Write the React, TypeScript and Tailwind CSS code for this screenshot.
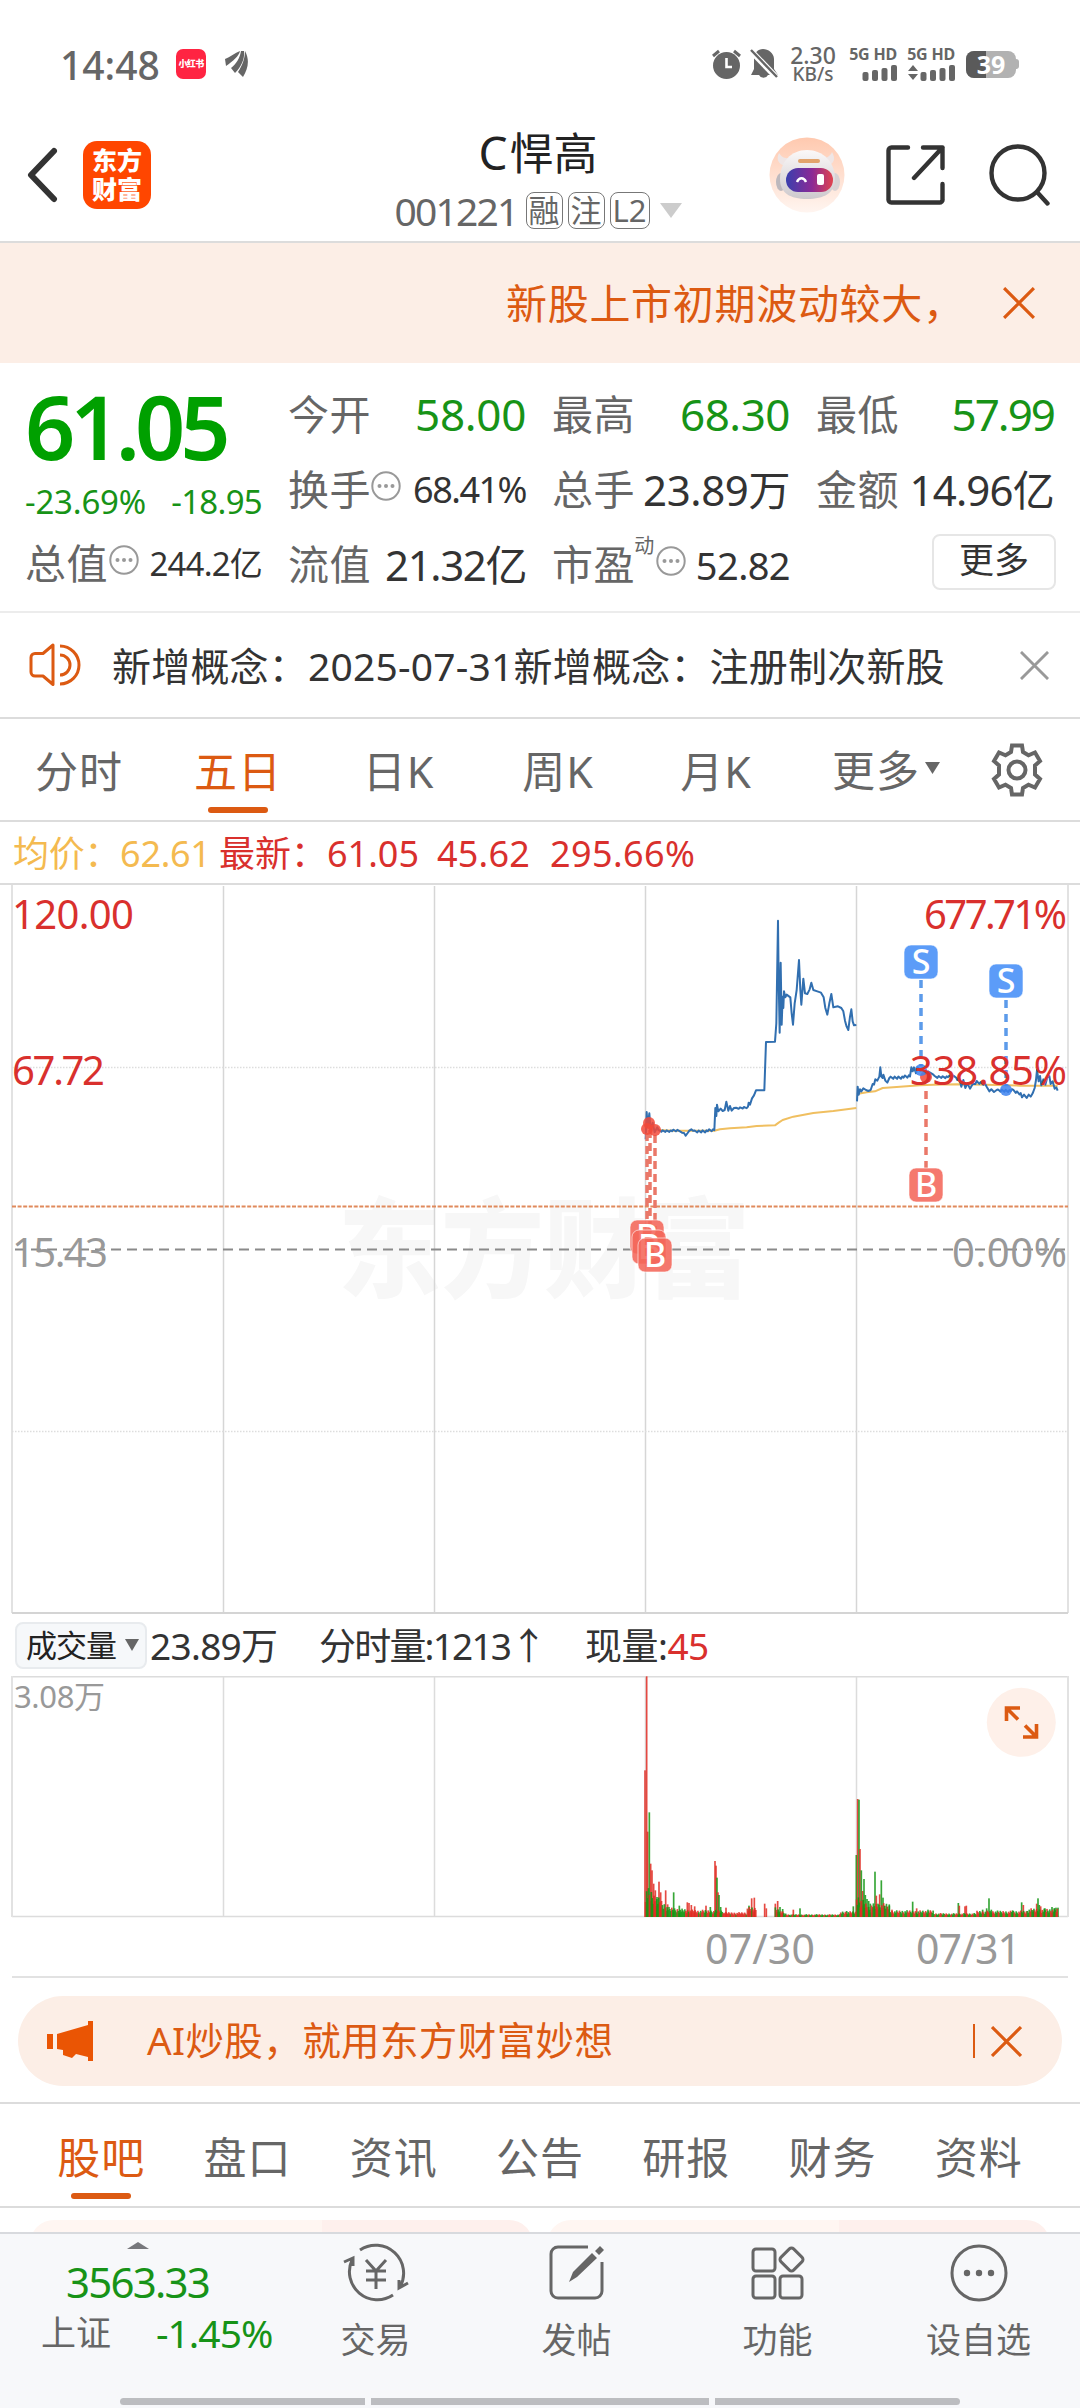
import type { ReactNode } from "react";

const ORANGE = "#dc5a12";

const quoteRows = [
  [
    { label: "今开", value: "58.00", cls: "text-[#179317] text-[44px] tracking-[-0.3px]" },
    { label: "最高", value: "68.30", cls: "text-[#179317] text-[44px] tracking-[-0.5px]" },
    { label: "最低", value: "57.99", cls: "text-[#179317] text-[44px] tracking-[-2px]" },
  ],
];

const periods = [
  { name: "分时", w: "w-[158px]" },
  { name: "五日", w: "w-[160px]", active: true },
  { name: "日K", w: "w-[161px]" },
  { name: "周K", w: "w-[158px]" },
  { name: "月K", w: "w-[158px]" },
];

const sections = ["股吧", "盘口", "资讯", "公告", "研报", "财务", "资料"];

// [x, height, colour], x from the left edge of the 07/30 session, in thirds of a px
const spikes: [number, number, "r" | "g"][] = [
  [135, 440, "r"], [140, 722, "r"], [143, 256, "r"], [148, 314, "g"], [152, 160, "r"], [156, 140, "r"],
  [161, 100, "r"], [166, 80, "r"], [171, 60, "g"], [177, 106, "r"], [182, 74, "r"], [197, 80, "r"],
  [203, 38, "r"], [221, 74, "g"], [238, 34, "g"], [262, 44, "r"], [267, 42, "r"], [274, 36, "r"], [284, 32, "r"],
  [318, 34, "r"], [331, 30, "g"], [345, 168, "r"], [348, 154, "r"], [351, 118, "g"], [354, 74, "r"], [357, 66, "g"],
  [362, 30, "g"], [378, 28, "r"], [447, 34, "g"], [455, 56, "r"], [463, 58, "r"], [494, 40, "r"], [499, 26, "r"],
  [526, 40, "r"], [533, 48, "r"], [540, 30, "g"], [548, 24, "g"], [580, 22, "r"], [600, 26, "g"],
  [740, 18, "g"], [760, 32, "g"], [769, 186, "g"], [773, 354, "r"], [777, 352, "g"], [780, 204, "r"],
  [784, 140, "g"], [788, 78, "r"], [792, 114, "g"], [796, 66, "g"], [801, 54, "g"], [806, 48, "g"],
  [811, 40, "g"], [818, 30, "r"], [825, 136, "g"], [829, 64, "r"], [834, 40, "g"], [839, 68, "r"], [844, 110, "g"],
  [849, 58, "g"], [854, 34, "r"], [862, 30, "g"], [868, 34, "g"], [876, 22, "r"], [938, 46, "g"], [950, 26, "r"],
  [984, 22, "g"], [1075, 42, "g"], [1078, 34, "r"], [1095, 32, "r"], [1099, 34, "r"], [1148, 22, "g"], [1160, 26, "g"],
  [1167, 56, "g"], [1174, 22, "g"], [1238, 20, "g"], [1265, 44, "g"], [1270, 36, "r"], [1300, 20, "r"],
  [1310, 40, "r"], [1314, 56, "g"], [1318, 36, "g"], [1322, 32, "r"], [1335, 26, "g"], [1356, 30, "g"], [1363, 26, "g"],
  [1368, 28, "g"], [1374, 28, "g"],
];

function baseHeight(x: number) {
  if (x < 205) return 90 - (x - 137) * 0.9;
  if (x < 300) return 28 - (x - 205) * 0.1;
  if (x < 372) return 20;
  if (x < 440) return 14;
  if (x < 470) return 28;
  if (x < 524) return 0;
  if (x < 560) return 30 - (x - 524) * 0.6;
  if (x < 720) return 8;
  if (x < 768) return 16;
  if (x < 812) return 70 - (x - 768);
  if (x < 870) return 38;
  if (x < 1000) return 19;
  if (x < 1130) return 11;
  if (x < 1280) return 18;
  return 24;
}

const volume: [number, number, "r" | "g"][] = [];
for (let x = 137, i = 0; x <= 1374; x += 2.8, i++) {
  const noise = ((i * 7919) % 97) / 97;
  const h = baseHeight(x) * (0.5 + noise * 0.6);
  const redShare = x > 205 && x < 256 ? 0.1 : (x > 256 && x < 300) || (x > 372 && x < 470) ? 0.85 : 0.45;
  if (h > 0) volume.push([x, h, ((i * 31) % 17) / 17 < redShare ? "r" : "g"]);
}

function wiggle(from: number, to: number, y0: number, y1: number, amp: number) {
  const pts: string[] = [];
  const n = Math.round((to - from) / 4);
  for (let i = 0; i <= n; i++) {
    const t = i / n;
    pts.push(`${(from + (to - from) * t).toFixed(1)},${(y0 + (y1 - y0) * t + (((i * 37) % 11) / 11 - 0.5) * amp).toFixed(1)}`);
  }
  return pts.join(" ");
}

const day1 = [
  "77,778 80,696 83,740 88,700 92,752 98,728 104,757 112,742",
  wiggle(116, 180, 754, 752, 7),
  "186,758 192,759 197,767 203,759 208,752 214,748 219,752",
  wiggle(224, 283, 756, 751, 9),
  "286,684 289,708 291,674 295,694 302,686 308,693 314,690 319,665 325,692 330,678 335,692 342,684",
  wiggle(348, 380, 686, 682, 6),
  "384,680 386,668 390,674 396,655 402,646 408,631 433,631 438,486 465,485 469,430 474,122 476,300 479,458 482,248 485,434 488,350 490,384 492,334 496,352 500,344 511,352 515,400 519,434 524,370 530,330 537,240 541,330 544,374 550,296 555,340 562,342 569,328 574,308 580,330 592,334 603,338 611,352 616,384 622,404 628,370 634,342 640,382 654,379 664,384 670,394 675,422 680,440 685,450 690,410 694,388 698,424 702,436 709,435",
].join(" ");

const day2 = [
  "711,664 713,620 716,644 720,628 724,634 730,625 738,630 745,633 752,630 758,612 762,614 766,598 772,602 778,590 781,562 784,590 788,594 790,584 796,602 802,608 808,594",
  wiggle(812, 870, 595, 590, 10),
  "874,562 878,574 882,562 888,580 892,562 900,572 908,566 916,580 924,574 934,580 940,584",
  wiggle(944, 1008, 592, 590, 8),
  "1012,600 1018,596 1024,620 1030,600 1036,624 1042,610 1050,626 1058,612 1066,612",
  wiggle(1070, 1094, 608, 612, 10),
  "1100,620 1108,634 1114,628 1122,636 1130,630",
  wiggle(1134, 1176, 633, 632, 9),
  wiggle(1180, 1202, 634, 642, 9),
  "1206,652 1212,644 1220,654 1226,644 1232,650 1238,640 1244,624 1248,600 1251,570 1256,604 1260,588 1264,616 1270,598 1276,614 1282,592 1288,588 1292,612 1298,604 1304,626 1309,622 1313,632",
].join(" ");

function InfoDots() {
  return (
    <svg className="w-[30px] h-[30px] shrink-0" viewBox="0 0 30 30">
      <circle cx="15" cy="15" r="13.7" fill="none" stroke="#999" strokeWidth="2" />
      <circle cx="8.5" cy="15" r="2" fill="#999" />
      <circle cx="15" cy="15" r="2" fill="#999" />
      <circle cx="21.5" cy="15" r="2" fill="#999" />
    </svg>
  );
}

function Cross({ color, size }: { color: string; size: number }) {
  return (
    <svg width={size} height={size} viewBox="0 0 30 30" fill="none" stroke={color} strokeWidth="3">
      <path d="M1 1L29 29M29 1L1 29" />
    </svg>
  );
}

function Tag({ children }: { children: ReactNode }) {
  return (
    <span className="h-[37px] px-[2px] flex items-center justify-center border-[1.5px] border-[#777] rounded-[8px] text-[31px] leading-none text-[#666]">
      {children}
    </span>
  );
}

function StatusBar() {
  return (
    <div className="h-[116px] pt-[46px] pl-[60px] pr-[61px] flex items-start justify-between text-[#666]">
      <div className="flex items-center h-[36px]">
        <span className="w-[116px] text-[39px] font-medium leading-none">14:48</span>
        <span className="w-[30px] h-[30px] rounded-[7px] bg-[#ff2442] text-white text-[9px] font-black flex items-center justify-center tracking-[-0.6px]">
          小红书
        </span>
        <svg className="ml-[19px] w-[23px] h-[26px]" viewBox="0 0 23 26" fill="#666">
          <path d="M0 8C5 6 10 2 15 0C14 5 8 10 1 15Z" />
          <path d="M6 17C11 13 15 7 16 0L19 0C20 8 16 16 10 22Z" />
          <path d="M13 21C17 15 20 8 20 0C25 9 23 18 18 26Z" />
        </svg>
      </div>
      <div className="flex items-center h-[36px]">
        <svg className="w-[29px] h-[32px]" viewBox="0 0 29 32">
          <circle cx="14.5" cy="17.5" r="13.5" fill="#666" />
          <path d="M1 8L7 3M28 8L22 3" stroke="#666" strokeWidth="3" />
          <path d="M14.5 10V19H20" stroke="#fff" strokeWidth="2.6" fill="none" />
        </svg>
        <svg className="ml-[9px] w-[28px] h-[32px]" viewBox="0 0 28 32">
          <path d="M13 1C18 1 24 5 24 11V21L28 27H18A5 5 0 0 1 9 27H1L4 21V11C4 5 8 1 13 1Z" fill="#666" />
          <path d="M0 2L28 31" stroke="#fff" strokeWidth="6" />
          <path d="M1 2L27 29" stroke="#666" strokeWidth="2.4" />
        </svg>
        <div className="ml-[12px] w-[46px] flex flex-col items-center font-medium">
          <span className="text-[23px] leading-[19px]">2.30</span>
          <span className="text-[19px] leading-[18px]">KB/s</span>
        </div>
        <div className="ml-[13px] flex gap-[10px]">
          {[0, 1].map((n) => (
            <div key={n} className="w-[48px] flex flex-col items-end gap-[2px]">
              <span className="text-[16px] leading-[15px] font-bold whitespace-nowrap tracking-[-0.2px]">5G HD</span>
              <svg className="w-[47px] h-[17px]" viewBox="0 0 47 17" fill="#666">
                {n === 1 && <path d="M5 1L10 7H0ZM5 16L0 10H10Z" />}
                <rect x="12.5" y="8" width="6" height="9" rx="2" />
                <rect x="22" y="6" width="6" height="11" rx="2" />
                <rect x="31.5" y="4" width="6" height="13" rx="2" />
                <rect x="41" y="1" width="6" height="16" rx="2" />
              </svg>
            </div>
          ))}
        </div>
        <div className="ml-[11px] flex items-center">
          <div className="relative w-[50px] h-[27px] rounded-[8px] bg-[#b2b2b2] flex items-center justify-center">
            <div className="absolute left-0 top-0 w-[20px] h-full rounded-l-[8px] bg-[#5a5a5a]" />
            <span className="relative text-white font-bold text-[25px] leading-none">39</span>
          </div>
          <div className="w-[3px] h-[10px] rounded-r bg-[#b2b2b2]" />
        </div>
      </div>
    </div>
  );
}

function Robot() {
  return (
    <svg className="w-[76px] h-[76px]" viewBox="0 0 76 76">
      <defs>
        <linearGradient id="halo" x1="0" y1="0" x2="0" y2="1">
          <stop offset="0" stopColor="#ffc9af" />
          <stop offset="1" stopColor="#fff5f0" />
        </linearGradient>
        <linearGradient id="visor" x1="0" y1="0" x2="1" y2="0">
          <stop offset="0" stopColor="#3a3fae" />
          <stop offset="0.55" stopColor="#8b2a96" />
          <stop offset="1" stopColor="#e0434f" />
        </linearGradient>
        <linearGradient id="head" x1="0" y1="0" x2="0" y2="1">
          <stop offset="0" stopColor="#fbf8f8" />
          <stop offset="1" stopColor="#cdc9cd" />
        </linearGradient>
      </defs>
      <circle cx="38" cy="38" r="37.5" fill="url(#halo)" />
      <path d="M16 29C9 27 7 22 10 16C13 21 18 22 22 21ZM58 29C65 27 67 22 63 15C61 20 57 21 53 21Z" fill="#efe6e6" />
      <ellipse cx="12" cy="45" rx="5" ry="9" fill="#bdb8bd" />
      <ellipse cx="66" cy="45" rx="5" ry="9" fill="#d8d2d4" />
      <path d="M38 13C54 13 66 25 66 42C66 56 55 62 38 62C21 62 11 56 11 42C11 25 22 13 38 13Z" fill="url(#head)" />
      <rect x="29" y="22" width="22" height="4" rx="2" fill="#e2a36c" />
      <rect x="17" y="31" width="47" height="24" rx="12" fill="url(#visor)" />
      <path d="M28 45C30 40 35 40 37 45" fill="none" stroke="#fff" strokeWidth="2.4" />
      <rect x="48" y="37" width="7" height="11" rx="2" fill="#fff" />
    </svg>
  );
}

function Header() {
  return (
    <header className="h-[127px] pl-[27px] pr-[30px] flex justify-between border-b-2 border-[#dcdcdc]">
      <div className="flex items-center w-[350px] h-[118px]">
        <svg className="w-[31px] h-[56px]" viewBox="0 0 31 56" fill="none" stroke="#333" strokeWidth="6" strokeLinecap="round" strokeLinejoin="round">
          <path d="M27 4L4 28L27 52" />
        </svg>
        <div className="ml-[25px] w-[68px] h-[68px] rounded-[14px] bg-[#ff4600] text-white text-[25px] leading-[29px] font-black flex flex-col items-center justify-center">
          <span>东方</span>
          <span>财富</span>
        </div>
      </div>
      <div className="flex flex-col items-center">
        <h1 className="mt-[8px] text-[46px] leading-[56px] text-[#222]">
          C<span className="text-[44px] ml-[2px]">悍高</span>
        </h1>
        <div className="flex items-center gap-[5px] h-[37px] mt-[11px]">
          <span className="text-[39px] leading-none text-[#666] tracking-[-1.8px] mr-[3px]">001221</span>
          <Tag>融</Tag>
          <Tag>注</Tag>
          <Tag>L2</Tag>
          <svg className="ml-[5px] w-[22px] h-[15px]" viewBox="0 0 22 15" fill="#ccc">
            <path d="M0 0H22L11 15Z" />
          </svg>
        </div>
      </div>
      <div className="flex items-center justify-end w-[351px] h-[118px]">
        <Robot />
        <svg className="ml-[41px] w-[59px] h-[60px]" viewBox="0 0 59 60" fill="none" stroke="#333" strokeWidth="4.4" strokeLinecap="round" strokeLinejoin="round">
          <path d="M22 2.5H5.5A3 3 0 0 0 2.5 5.5V54A3 3 0 0 0 5.5 57.5H53A3 3 0 0 0 56.500 54V39" />
          <path d="M37 2.5H56.5V23M56.5 2.5L28 33" />
        </svg>
        <svg className="ml-[44px] w-[61px] h-[62px]" viewBox="0 0 61 62" fill="none" stroke="#333" strokeWidth="4.4" strokeLinecap="round">
          <circle cx="29" cy="29" r="26.5" />
          <path d="M48 48L58.5 59.5" />
        </svg>
      </div>
    </header>
  );
}

function RiskBanner() {
  return (
    <div className="h-[120px] bg-[#fceee6] flex items-center pl-[506px] pr-[45px] justify-between text-[#dc5a12]">
      <span className="whitespace-nowrap text-[41px] leading-[50px] tracking-[0.7px]">新股上市初期波动较大，</span>
      <Cross color={ORANGE} size={32} />
    </div>
  );
}

function Label({ children }: { children: ReactNode }) {
  return <span className="text-[41px] leading-none text-[#666] tracking-[0.6px]">{children}</span>;
}

function Quote() {
  return (
    <section className="h-[250px] border-b-2 border-[#ececec] pl-[25px] pr-[26px] pt-[13px] flex">
      <div className="w-[238px]">
        <div className="h-[100px] flex items-center text-[88px] leading-none font-semibold text-[#00a000] tracking-[-5px]">61.05</div>
        <div className="h-[50px] flex items-center justify-between text-[33px] leading-none text-[#179317]">
          <span className="tracking-[-0.2px]">-23.69%</span>
          <span className="tracking-[-0.7px]">-18.95</span>
        </div>
        <div className="h-[75px] flex items-center">
          <Label>总值</Label>
          <div className="ml-px mb-[8px]"><InfoDots /></div>
          <span className="ml-auto text-[33px] leading-none text-[#333] tracking-[-0.8px] whitespace-nowrap">244.2亿</span>
        </div>
      </div>
      <div className="flex-1 pl-[26px]">
        {quoteRows.map((row, i) => (
          <div key={i} className="h-[76px] grid grid-cols-[238px_238px_238px] gap-x-[26px]">
            {row.map((c) => (
              <div key={c.label} className="flex items-center justify-between">
                <Label>{c.label}</Label>
                <span className={`${c.cls} leading-none`}>{c.value}</span>
              </div>
            ))}
          </div>
        ))}
        <div className="h-[75px] grid grid-cols-[238px_238px_238px] gap-x-[26px] text-[#333]">
          <div className="flex items-center">
            <Label>换手</Label>
            <div className="mb-[8px]"><InfoDots /></div>
            <span className="ml-auto text-[36px] leading-none tracking-[-1.5px]">68.41%</span>
          </div>
          <div className="flex items-center justify-between whitespace-nowrap">
            <Label>总手</Label>
            <span className="text-[42px] leading-none tracking-[-0.4px]">23.89万</span>
          </div>
          <div className="flex items-center justify-between whitespace-nowrap">
            <Label>金额</Label>
            <span className="text-[42px] leading-none tracking-[-0.8px]">14.96亿</span>
          </div>
        </div>
        <div className="h-[75px] grid grid-cols-[238px_238px_238px] gap-x-[26px] text-[#333]">
          <div className="flex items-center justify-between whitespace-nowrap">
            <Label>流值</Label>
            <span className="text-[42px] leading-none tracking-[-1.4px]">21.32亿</span>
          </div>
          <div className="flex items-center">
            <Label>市盈</Label>
            <span className="text-[20px] leading-none text-[#666] mb-[38px] -ml-px">动</span>
            <div className="mb-[8px] ml-[2px]"><InfoDots /></div>
            <span className="ml-auto text-[38px] leading-none tracking-[-0.6px]">52.82</span>
          </div>
          <div className="flex items-center justify-end">
            <button className="w-[124px] h-[56px] mb-[6px] mr-[-2px] border-2 border-[#e6e6e6] rounded-[8px] text-[35px] leading-none pb-[4px]">更多</button>
          </div>
        </div>
      </div>
    </section>
  );
}

function NewsRow() {
  return (
    <div className="h-[106px] border-b-2 border-[#dcdcdc] pl-[29px] pr-[31px] flex items-center">
      <svg className="w-[52px] h-[44px]" viewBox="0 0 52 44" fill="none" stroke={ORANGE} strokeWidth="3">
        <path d="M24 2L14 10.5H6A4 4 0 0 0 2 14.5V29A4 4 0 0 0 6 33H14L24 41.5Z" strokeLinejoin="round" />
        <path d="M31 12A10 10 0 0 1 31 32M31 3A19 19 0 0 1 31 41" />
      </svg>
      <span className="ml-[31px] text-[39px] leading-none text-[#333] whitespace-nowrap tracking-[0.2px]">
        新增概念：2025-07-31新增概念：注册制次新股
      </span>
      <div className="ml-auto"><Cross color="#999" size={29} /></div>
    </div>
  );
}

function PeriodTabs() {
  return (
    <nav className="h-[103px] border-b-2 border-[#dcdcdc] flex items-center text-[43px] leading-none text-[#666]">
      {periods.map((p) => (
        <div key={p.name} className={`${p.w} h-full flex flex-col items-center ${p.active ? "text-[#dc5a12]" : ""}`}>
          <span className="h-[88px] pt-[16px] flex items-center tracking-[1px]">{p.name}</span>
          {p.active && <span className="w-[60px] h-[6px] rounded-full bg-[#dc5a12]" />}
        </div>
      ))}
      <div className="w-[158px] ml-[19px] flex items-center pt-px">
        <span className="ml-[18px] tracking-[1px]">更多</span>
        <svg className="ml-[5px] mb-[5px] w-[15px] h-[12px]" viewBox="0 0 15 12" fill="#666"><path d="M0 0H15L7.5 12Z" /></svg>
      </div>
      <svg className="ml-[19px] w-[52px] h-[54px]" viewBox="0 0 52 54" fill="none" stroke="#666" strokeWidth="4">
        <path d="M21 2.5H31L32 9L37.5 12.3L44 9.5L49 18L44 22.5V31.5L49 36L44 44.5L37.5 41.7L32 45L31 51.5H21L20 45L14.5 41.7L8 44.5L3 36L8 31.5V22.5L3 18L8 9.5L14.5 12.3L20 9Z" />
        <circle cx="26" cy="27" r="8.5" />
      </svg>
    </nav>
  );
}

function Marker({ x, y, kind }: { x: number; y: number; kind: "S" | "B" }) {
  return (
    <g>
      <rect x={x - 17} y={y - 17} width="34" height="34" rx="7" fill={kind === "S" ? "#5c9cf8" : "#f4675a"} fillOpacity={kind === "S" ? 1 : 0.88} stroke="#fff" strokeOpacity="0.6" />
      <text x={x} y={y + 12} textAnchor="middle" fontSize="34" fontWeight="500" fill="#fff">{kind}</text>
    </g>
  );
}

function PriceChart() {
  return (
    <svg className="block w-[1080px] h-[729px]" viewBox="0 885 1080 729">
      <g fontSize="108" fontWeight="900" fill="#f7f7f7">
        <text x="338" y="1289" textLength="412" lengthAdjust="spacingAndGlyphs">东方财富</text>
      </g>
      <g fill="none" stroke="#d6d6d6" strokeWidth="1.5">
        <path d="M223.5 886V1613M434.5 886V1613M645.5 886V1613M856.5 886V1613" />
        <path d="M12 885V1613M1068 885V1613" strokeWidth="2" stroke="#e2e2e2" />
        <path d="M12 1067.5H1068M12 1431.5H1068" stroke="#ddd" strokeDasharray="1.5 1.5" />
        <path d="M12 1613H1068" stroke="#d4d4d4" strokeWidth="2" />
      </g>
      <path d="M12 1206.5H1068" stroke="#e08a5c" strokeWidth="1.8" strokeDasharray="4 1.6" />
      <path d="M15 1249.5H1066" stroke="#8a8a8a" strokeWidth="2.2" strokeDasharray="10 6" />
      <g transform="translate(620 880) scale(0.33333)" fill="none" strokeLinejoin="round">
        <g stroke="#f0bf60" strokeWidth="6">
          <polyline points="112,750 160,752 230,752 283,752 300,748 330,745 380,742 410,738 465,736 476,728 488,720 520,710 580,699 640,693 709,684" />
          <polyline points="711,642 740,637 765,634 788,624 830,621 900,616 940,614 1010,613 1100,614 1200,617 1313,617" />
        </g>
        <g stroke="#316fb0" strokeWidth="6">
          <polyline points={day1} />
          <polyline points={day2} />
        </g>
      </g>
      <g strokeWidth="3.5" fill="none">
        <path d="M921 980V1066M1006 1000V1086" stroke="#5c9bea" strokeDasharray="8 6" />
        <path d="M926 1091V1168" stroke="#ea7869" strokeDasharray="8 6" />
        <path d="M647 1133V1225M650 1130V1232M655 1135V1240" stroke="#ea7869" strokeDasharray="8 5" />
      </g>
      <g fill="#f2493a" fillOpacity="0.85">
        <circle cx="649" cy="1123" r="6" />
        <circle cx="647" cy="1129" r="6" />
        <circle cx="655" cy="1130" r="6" />
        <circle cx="926" cy="1077" r="6" />
      </g>
      <g fill="#3d83ee" fillOpacity="0.85">
        <circle cx="921" cy="1070" r="6" />
        <circle cx="1006" cy="1090" r="6" />
      </g>
      <Marker x={921} y={962} kind="S" />
      <Marker x={1006} y={981} kind="S" />
      <Marker x={926} y={1185} kind="B" />
      <Marker x={647} y={1237} kind="B" />
      <Marker x={649} y={1247} kind="B" />
      <Marker x={655} y={1255} kind="B" />
      <g fontSize="40" fill="#d9302d">
        <text x="12" y="928.500" textLength="122">120.00</text>
        <text x="12" y="1085" textLength="93">67.72</text>
        <text x="1067" y="928.500" textAnchor="end" textLength="143">677.71%</text>
        <text x="1067" y="1085" textAnchor="end" textLength="157">338.85%</text>
      </g>
      <g fontSize="40" fill="#999">
        <text x="12" y="1267" textLength="96">15.43</text>
        <text x="1067" y="1267" textAnchor="end" textLength="115">0.00%</text>
      </g>
    </svg>
  );
}

function VolumeChart() {
  return (
    <svg className="block w-[1080px] h-[303px]" viewBox="0 1676 1080 303">
      <g fill="none" stroke="#dcdcdc" strokeWidth="1.5">
        <path d="M12 1676.7H1068M12 1916.5H1068M223.5 1677V1916M434.5 1677V1916M645.5 1677V1916M856.5 1677V1916" />
        <path d="M12 1676V1917M1068 1676V1917" strokeWidth="2" stroke="#e2e2e2" />
        <path d="M12 1977H1068" stroke="#e2e2e2" strokeWidth="2" />
      </g>
      <g transform="translate(600 1917) scale(0.33333 -0.33333)">
        {[...spikes, ...volume].map(([x, h, c], i) => (
          <rect key={i} x={x - 2.5} width="5" height={h} fill={c === "r" ? "#e02a22" : "#149614"} fillOpacity="0.85" />
        ))}
      </g>
      <text x="14" y="1708" fontSize="31" fill="#999" textLength="91">3.08万</text>
      <text x="705" y="1964" fontSize="41" fill="#999" textLength="110">07/30</text>
      <text x="916" y="1964" fontSize="41" fill="#999" textLength="105">07/31</text>
      <circle cx="1021.3" cy="1722.3" r="34.5" fill="#fef0e9" />
      <g fill="none" stroke={ORANGE} strokeWidth="3.6">
        <path d="M1006.5 1721V1708H1020M1007 1708.5L1018 1719.5" />
        <path d="M1036.5 1724V1737H1023M1036 1736.5L1025 1725.5" />
      </g>
    </svg>
  );
}

function Chart() {
  return (
    <section>
      <div className="h-[63px] pt-[2px] border-b-2 border-[#dcdcdc] pl-[13px] flex items-center text-[36px] leading-none text-[#d9302d] whitespace-nowrap">
        <span className="w-[206px] text-[#f4ba50] tracking-[-0.3px]">均价：62.61</span>
        <span className="w-[218px]">最新：61.05</span>
        <span className="w-[113px] tracking-[0.2px]">45.62</span>
        <span className="tracking-[0.4px]">295.66%</span>
      </div>
      <PriceChart />
      <div className="h-[62px] pl-[15px] flex items-center text-[37px] leading-none text-[#333] whitespace-nowrap">
        <div className="w-[132px] h-[47px] pl-[9px] flex items-center rounded-[8px] border-2 border-[#e8ebee] bg-[#f6f8fa] text-[31px] text-[#222] tracking-[-1px]">
          成交量
          <svg className="ml-[9px] w-[14px] h-[12px]" viewBox="0 0 14 12" fill="#666"><path d="M0 0H14L7 12Z" /></svg>
        </div>
        <span className="ml-[3px] w-[169px] tracking-[-0.7px]">23.89万</span>
        <span className="w-[266px] tracking-[-1.8px]">分时量:1213↑</span>
        <span className="tracking-[-0.5px]">现量:<span className="text-[#d9302d]">45</span></span>
      </div>
      <VolumeChart />
    </section>
  );
}

function Promo() {
  return (
    <div className="h-[125px] border-b-2 border-[#dcdcdc] pt-[17px] px-[18px]">
      <div className="h-[90px] rounded-full bg-[#fceee6] pl-[29px] pr-[40px] flex items-center text-[#dc5a12]">
        <svg className="w-[47px] h-[40px]" viewBox="0 0 47 40" fill="#ea5504">
          <path d="M0 13H6V28H0ZM10 13L41 4V0H46V40H41V36L29 33L25 37L16 34V29L10 28Z" />
        </svg>
        <span className="ml-[53px] pb-[2px] text-[38.5px] leading-none whitespace-nowrap tracking-[0.4px]">AI炒股，就用东方财富妙想</span>
        <span className="ml-auto mr-[16px] w-[2px] h-[34px] bg-[#dc5a12]" />
        <Cross color={ORANGE} size={31} />
      </div>
    </div>
  );
}

function SectionTabs() {
  return (
    <nav className="h-[104px] border-b-2 border-[#dcdcdc] px-[28px] grid grid-cols-7 text-[43px] leading-none text-[#666]">
      {sections.map((s, i) => (
        <div key={s} className={i === 0 ? "flex flex-col items-center text-[#dc5a12]" : "flex flex-col items-center"}>
          <span className="h-[89px] pt-[18px] tracking-[1px] flex items-center">{s}</span>
          {i === 0 && <span className="w-[60px] h-[6px] rounded-full bg-[#dc5a12]" />}
        </div>
      ))}
    </nav>
  );
}

function NavItem({ label, children }: { label: string; children: ReactNode }) {
  return (
    <div className="w-[201px] flex flex-col items-center pt-[9px]">
      <svg className="w-[66px] h-[60px]" viewBox="0 0 66 60" fill="none" stroke="#666" strokeWidth="3">{children}</svg>
      <span className="mt-[17px] text-[35px] leading-[40px] text-[#666]">{label}</span>
    </div>
  );
}

function BottomNav() {
  return (
    <footer className="h-[176px] bg-[#f7f8fa] border-t-2 border-[#d8dade]">
      <div className="h-[164px] flex">
        <div className="w-[275px] flex flex-col items-center pt-[8px]">
          <svg className="w-[22px] h-[7px]" viewBox="0 0 22 7" fill="#77787c"><path d="M0 7L11 0L22 7Z" /></svg>
          <span className="mt-[8px] text-[42px] leading-[50px] text-[#179317] tracking-[-1.8px]">3563.33</span>
          <div className="w-full pl-[41px] flex items-center h-[50px]">
            <span className="w-[115px] text-[35px] leading-none text-[#666]">上证</span>
            <span className="text-[39px] leading-none text-[#179317] tracking-[-1px]">-1.45%</span>
          </div>
        </div>
        <NavItem label="交易">
          <path d="M17 7A28 28 0 0 1 57 44M50 52A28 28 0 0 1 9 17M1 19L10 15V23M65 40L56 45V37" />
          <path d="M23 17L33 28L43 17M23 28H43M23 37H43M33 28V46" />
        </NavItem>
        <NavItem label="发帖">
          <path d="M44 4H14A7 7 0 0 0 7 11V48A7 7 0 0 0 14 55H51A7 7 0 0 0 58 48V19" />
          <path d="M25 39L29 29L48 10L53 15L33 34ZM51 8L56 3L60 7L55 12Z" fill="#666" stroke="none" />
        </NavItem>
        <NavItem label="功能">
          <rect x="8" y="6" width="22" height="22" rx="3" />
          <rect x="8" y="33" width="22" height="22" rx="3" />
          <rect x="35" y="33" width="22" height="22" rx="3" />
          <rect x="37.5" y="7.5" width="18" height="18" rx="3" transform="rotate(45 46.5 16.5)" />
        </NavItem>
        <NavItem label="设自选">
          <circle cx="33" cy="30" r="27" />
          <g fill="#666" stroke="none">
            <circle cx="21" cy="30" r="3.2" />
            <circle cx="33" cy="30" r="3.2" />
            <circle cx="45" cy="30" r="3.2" />
          </g>
        </NavItem>
      </div>
      <div className="px-[120px] flex gap-[6px]">
        <span className="w-[245px] h-[7px] rounded-l-full bg-[#bcbdc0]" />
        <span className="w-[338px] h-[7px] bg-[#bcbdc0]" />
        <span className="w-[245px] h-[7px] rounded-r-full bg-[#bcbdc0]" />
      </div>
    </footer>
  );
}

export default function App() {
  return (
    <div className="w-[1080px] h-[2408px] overflow-hidden bg-white flex flex-col font-['Noto_Sans','Noto_Sans_CJK_SC',sans-serif]">
      <StatusBar />
      <Header />
      <RiskBanner />
      <Quote />
      <NewsRow />
      <PeriodTabs />
      <Chart />
      <Promo />
      <SectionTabs />
      {/* top edge of the first cards in the feed */}
      <div className="h-[24px] pt-[12px] px-[30px] flex gap-[14px] overflow-hidden">
        {[0, 1].map((n) => (
          <div key={n} className="flex-1 h-[60px] rounded-[24px] overflow-hidden flex">
            <div className="w-[58%] bg-[#fff6f2]" />
            <div className="flex-1 bg-[#fef0ed]" />
          </div>
        ))}
      </div>
      <BottomNav />
    </div>
  );
}
